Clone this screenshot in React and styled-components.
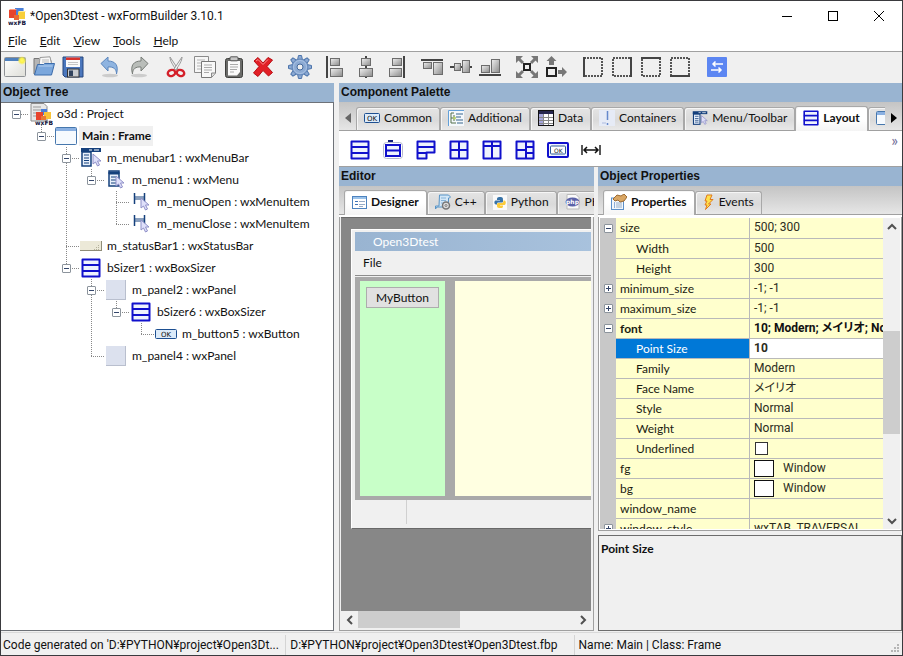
import React from "react";
import styled, { createGlobalStyle, css } from "styled-components";

const GlobalStyle = createGlobalStyle`
  * {
    box-sizing: border-box;
  }
  body {
    margin: 0;
    font-family: Lato, "Noto Sans CJK JP", sans-serif;
    font-size: 12px;
    line-height: 20px;
    color: #111;
    overflow: hidden;
  }
  button, input {
    font: inherit;
    color: inherit;
    border: 0;
    padding: 0;
    margin: 0;
    background: none;
  }
  svg {
    display: block;
    flex: none;
  }
`;

/* ---------- window ---------- */

const Window = styled.div`
  display: flex;
  flex-direction: column;
  height: 100vh;
  border: 1px solid #3a3a3e;
  background: #f0f0f0;
  white-space: nowrap;
`;

const TitleBar = styled.header`
  display: flex;
  align-items: center;
  height: 30px;
  padding-left: 7px;
  background: #fff;
`;

const Title = styled.h1`
  flex: 1;
  margin: 0;
  padding-left: 4px;
  font-family: Roboto, sans-serif;
  font-size: 12px;
  font-weight: 400;
`;

const WindowButton = styled.button`
  display: flex;
  align-items: center;
  justify-content: center;
  width: 46px;
  height: 30px;
`;

const MenuBar = styled.nav`
  display: flex;
  height: 20px;
  padding-left: 7px;
  gap: 13px;
  background: #fff;
`;

const MenuButton = styled.button`
  &::first-letter {
    text-decoration: underline;
  }
`;

const ToolBar = styled.div`
  display: flex;
  height: 32px;
  border-top: 1px solid #a0a0a0;
  overflow: hidden;
`;

const ToolGroup = styled.div`
  display: flex;
  margin-right: 8px;
`;

const ToolButton = styled.button`
  display: flex;
  align-items: center;
  justify-content: center;
  width: 29px;
  height: 30px;
  padding-right: 1px;
`;

const Main = styled.main`
  display: grid;
  grid-template-columns: minmax(0, 333fr) minmax(0, 563fr);
  gap: 5px;
  flex: 1;
  min-height: 0;
`;

const Pane = styled.section`
  display: flex;
  flex-direction: column;
  min-width: 0;
  min-height: 0;
`;

const Caption = styled.h2`
  flex: none;
  height: 19px;
  margin: 0;
  padding-left: 2px;
  background: #99b4d1;
  font-family: "Liberation Sans", sans-serif;
  font-size: 12px;
  line-height: 19px;
  font-weight: 700;
`;

const StatusBar = styled.footer`
  display: flex;
  height: 23px;
  padding-top: 2px;
  border-top: 1px solid #d9d9d9;
  font-family: Roboto, sans-serif;
`;

const StatusCell = styled.div`
  flex: ${(p) => p.$grow} 1 0;
  min-width: 0;
  padding: 0 4px 0 ${(p) => (p.$first ? "2px" : "4px")};
  border-right: ${(p) => (p.$last ? "0" : "1px solid #d4d4d4")};
  overflow: hidden;
  text-overflow: ellipsis;
`;

const Grip = styled.div`
  display: flex;
  align-items: flex-end;
  padding: 0 2px 2px 0;
`;

/* ---------- tree ---------- */

const Tree = styled.ul`
  flex: 1;
  margin: 0 0 1px;
  padding: 0 0 0 3px;
  border: 1px solid #6e7278;
  border-left: 0;
  background: #fff;
  list-style: none;
  overflow: hidden;
`;

const TreeRow = styled.li`
  display: flex;
  align-items: center;
  height: 22px;
`;

const dotsDown = "repeating-linear-gradient(180deg, #888 0 1px, transparent 1px 2px)";
const dotsAcross = "repeating-linear-gradient(90deg, #888 0 1px, transparent 1px 2px)";

const guides = {
  none: "none",
  start: `${dotsAcross} 13px 11px / 12px 1px no-repeat`,
  line: `${dotsDown} 12px 0 / 1px 22px no-repeat`,
  tee: `${dotsDown} 12px 0 / 1px 22px no-repeat, ${dotsAcross} 12px 11px / 13px 1px no-repeat`,
  end: `${dotsDown} 12px 0 / 1px 12px no-repeat, ${dotsAcross} 12px 11px / 13px 1px no-repeat`,
};

const Guide = styled.span`
  display: flex;
  align-items: center;
  justify-content: center;
  width: 25px;
  height: 22px;
  padding-top: 1px;
  background: ${(p) => guides[p.$kind]};
`;

const Expander = styled.button`
  display: flex;
  align-items: center;
  justify-content: center;
  width: 9px;
  height: 9px;
  border: 1px solid #8c949c;
  border-radius: 1px;
  background: #fff;
`;

const TreeIcon = styled.span`
  display: flex;
  align-items: center;
  justify-content: center;
  width: 25px;
  height: 22px;
  padding-right: 1px;
`;

const TreeLabel = styled.span`
  padding: 0 2px 0 3px;
  ${(p) =>
    p.$selected &&
    css`
      background: #f0f0f0;
      font-weight: 700;
    `}
`;

/* ---------- notebooks ---------- */

const TabStrip = styled.div`
  display: flex;
  align-items: flex-end;
  flex: none;
  height: 31px;
  padding: 0 0 2px ${(p) => p.$inset || "5px"};
  background: linear-gradient(#c4c4c4, #e6e6e6 28px, #a0a0a0 28px 29px, #fff 29px);
  overflow: hidden;
`;

const TabList = styled.div`
  display: flex;
  align-items: flex-end;
  flex: 1;
  min-width: 0;
  overflow: hidden;
`;

const Tab = styled.button`
  display: flex;
  align-items: center;
  flex: none;
  gap: 4px;
  height: ${(p) => (p.$active ? "25px" : "24px")};
  padding: 0 7px 2px;
  border: 1px solid #a8a8a8;
  border-bottom: ${(p) => (p.$active ? "0" : "1px solid #a0a0a0")};
  border-radius: 3px 3px 0 0;
  background: ${(p) =>
    p.$active ? "linear-gradient(#fff 50%, #f4f4f4)" : "linear-gradient(#e4e4e4, #dadada 55%, #e9e9e9)"};
  box-shadow: inset 1px 1px #f6f6f6;
  font-weight: ${(p) => (p.$active ? 700 : 400)};
`;

const StripArrow = styled.button`
  display: flex;
  align-items: center;
  justify-content: center;
  flex: none;
  width: 17px;
  height: 25px;
  padding-bottom: 2px;
`;

const Palette = styled.div`
  display: flex;
  justify-content: space-between;
  flex: none;
  height: 34px;
  padding: 0 4px;
  background: #fff;
  border-bottom: 1px solid #a0a0a0;
`;

const PaletteTools = styled.div`
  display: flex;
`;

const PaletteButton = styled.button`
  display: flex;
  align-items: center;
  justify-content: center;
  width: 33px;
  height: 33px;
`;

const MoreButton = styled.button`
  align-self: flex-start;
  height: 14px;
  font-size: 16px;
  line-height: 8px;
  color: #6f6a96;
`;

const Lower = styled.div`
  display: grid;
  grid-template-columns: minmax(0, 255fr) minmax(0, 304fr);
  gap: 4px;
  flex: 1;
  min-height: 0;
`;

/* ---------- designer ---------- */

const DesignerFrame = styled.div`
  display: flex;
  flex-direction: column;
  flex: 1;
  min-height: 0;
  margin-bottom: 1px;
  padding: 0 2px 2px 1px;
  border: 1px solid #a0a0a0;
  border-top: 0;
  background: #f0f0f0;
`;

const Canvas = styled.div`
  flex: 1;
  min-height: 0;
  padding: 11px 0 0 10px;
  border-top: 1px solid #696969;
  background: #878787;
  overflow: hidden;
`;

const Form = styled.div`
  display: flex;
  flex-direction: column;
  width: 500px;
  height: 300px;
  padding: 2px 2px 1px 3px;
  border: 1px solid #fff;
  border-bottom-color: #696969;
  background: #f0f0f0;
`;

const FormTitle = styled.div`
  height: 19px;
  padding-left: 18px;
  background: linear-gradient(90deg, #99b4d1, #b9d1ea);
  color: #fff;
  line-height: 20px;
`;

const FormMenu = styled.div`
  height: 25px;
  padding-left: 8px;
  border-bottom: 1px solid #8d8d8d;
  line-height: 24px;
`;

const FormBody = styled.div`
  display: flex;
  flex: 1;
  gap: 10px;
  margin-top: 1px;
  padding: 4px 4px 4px 5px;
  background: #a9a9a9;
`;

const GreenPanel = styled.div`
  width: 85px;
  padding: 6px;
  background: #c8ffc8;
`;

const YellowPanel = styled.div`
  flex: 1;
  background: #ffffe1;
`;

const FormButton = styled.button`
  width: 100%;
  height: 21px;
  border: 1px solid #adadad;
  background: #e1e1e1;
`;

const FormStatus = styled.div`
  display: grid;
  grid-template-columns: 52px 1fr;
  height: 27px;
  padding-bottom: 3px;
`;

const FormStatusCell = styled.div`
  border-right: 1px solid #d0d0d0;
`;

const HScroll = styled.div`
  display: flex;
  flex: none;
  height: 17px;
  background: #f0f0f0;
`;

const ScrollButton = styled.button`
  display: flex;
  align-items: center;
  justify-content: center;
  grid-row: ${(p) => p.$row || "auto"};
  width: 17px;
  height: 17px;
  flex: none;
`;

const HTrack = styled.div`
  flex: 1;
  display: grid;
  grid-template-columns: 47fr 53fr;
`;

const Thumb = styled.div`
  background: #cdcdcd;
`;

/* ---------- property grid ---------- */

const GridFrame = styled.div`
  display: flex;
  flex: 1;
  min-height: 0;
  margin-bottom: 4px;
  padding: 1px 1px 1px 1px;
  border: 1px solid #a0a0a0;
  border-top: 0;
  background: #fff;
`;

const GridView = styled.div`
  flex: 1;
  min-width: 0;
  overflow: hidden;
  background: #c8c8c8;
`;

const Grid = styled.table`
  width: 100%;
  table-layout: fixed;
  border-collapse: collapse;

  td, th {
    height: 20px;
    padding: 0 0 0 4px;
    text-align: left;
    line-height: 19px;
    overflow: hidden;
  }
`;

const GutterCol = styled.col`
  width: 16px;
`;

const GutterCell = styled.td`
  && {
    background: #c8c8c8;
  }
`;

const NameCell = styled.th`
  && {
    padding-left: ${(p) => (p.$child ? "20px" : "4px")};
    border-bottom: 1px solid #b9b9b9;
    background: ${(p) => (p.$selected ? "#0078d7" : "#ffffcd")};
    color: ${(p) => (p.$selected ? "#fff" : "#1b1b10")};
    font-weight: ${(p) => (p.$bold ? 700 : 400)};
  }
`;

const ValueCell = styled.td`
  && {
    border-bottom: 1px solid #b9b9b9;
    border-left: 1px solid #b9b9b9;
    background: ${(p) => (p.$selected ? "#fff" : "#ffffcd")};
    color: ${(p) => (p.$bold ? "#111" : "#2c2c20")};
    font-family: Roboto, "Noto Sans CJK JP", sans-serif;
    font-weight: ${(p) => (p.$bold ? 700 : 400)};
    font-feature-settings: "palt";
  }
`;

const ValueInput = styled.input`
  display: block;
  width: 100%;
  height: 19px;
  font-weight: 700;
`;

const Check = styled.input`
  display: block;
  appearance: none;
  width: 13px;
  height: 13px;
  margin-left: 1px;
  border: 1px solid #333;
  background: #fff;
`;

const ColourValue = styled.span`
  display: flex;
  align-items: center;
  gap: 9px;
`;

const Swatch = styled.span`
  width: 20px;
  height: 17px;
  border: 1px solid #111;
  background: #fff;
`;

const VScroll = styled.div`
  display: grid;
  grid-template-rows: 17px 96fr 104fr 78fr 17px;
  width: 17px;
  background: #f0f0f0;
`;

const VThumb = styled.div`
  grid-row: 3;
  background: #cdcdcd;
`;

const Description = styled.div`
  flex: none;
  height: 96px;
  margin-bottom: 1px;
  padding: 3px 2px;
  border: 1px solid #6d6d6d;
  font-weight: 700;
`;

/* ---------- icons ---------- */

function Icon({ w = 22, h = 22, size, children, crisp }) {
  return (
    <svg
      width={size || w}
      height={size ? Math.round((size * h) / w) : h}
      viewBox={`0 0 ${w} ${h}`}
      fill="none"
      shapeRendering={crisp ? "crispEdges" : "auto"}
      aria-hidden="true"
    >
      {children}
    </svg>
  );
}

const LogoIcon = () => (
  <Icon w={18} h={18}>
    <path d="M8 1h8v3h-8z" fill="#8fb6f0" />
    <rect x="7" y="1" width="8" height="7" fill="#4b7fd8" />
    <rect x="1" y="3" width="7" height="8" fill="#e8442c" />
    <path d="M1 3l1-1h7l-1 1z" fill="#ff9a80" />
    <rect x="10" y="5" width="7" height="7" fill="#f8cf3a" />
    <path d="M10 5l1-1h7l-1 1z" fill="#ffeb94" />
    <rect x="6" y="8" width="5" height="5" fill="#e86a35" />
    <text x="0" y="18" fontFamily="DejaVu Sans" fontWeight="700" fontSize="6" fill="#11113a">
      wxFB
    </text>
  </Icon>
);

const ProjectIcon = () => (
  <Icon w={24} h={22}>
    <path d="M2 .5h13l3 3V18H2z" fill="#e8e8e8" stroke="#8c8c8c" />
    <path d="M4 4h8M4 7h8M4 10h6M4 13h5" stroke="#999" />
    <rect x="12" y="6" width="6" height="6" fill="#4b7fd8" />
    <rect x="7" y="9" width="7" height="8" fill="#e8442c" />
    <rect x="15" y="9" width="7" height="7" fill="#f8c43a" />
    <rect x="12" y="13" width="5" height="4" fill="#e87a35" />
    <text x="6" y="22" fontFamily="DejaVu Sans" fontWeight="700" fontSize="6" fill="#11113a">
      wxFB
    </text>
  </Icon>
);

const NewIcon = () => (
  <Icon>
    <defs>
      <radialGradient id="newGlow">
        <stop offset="0" stopColor="#fffb60" />
        <stop offset=".5" stopColor="#fbf04a" />
        <stop offset="1" stopColor="#fbf04a" stopOpacity="0" />
      </radialGradient>
      <linearGradient id="newPage" x2="1" y2="1">
        <stop offset="0" stopColor="#fff" />
        <stop offset="1" stopColor="#deded8" />
      </linearGradient>
    </defs>
    <rect x=".5" y="1.500" width="21" height="19" rx="1" fill="url(#newPage)" stroke="#8f9296" />
    <path d="M1 2h20v3H1z" fill="#4e80bd" />
    <circle cx="18" cy="4.500" r="4.500" fill="url(#newGlow)" />
  </Icon>
);

const OpenIcon = () => (
  <Icon>
    <path d="M1 18V2.500h5l2 2h10V18z" fill="#b5b5b5" stroke="#777" />
    <path d="M6 10l1-8.500L17 .8l2 9z" fill="#f7f7f7" stroke="#999" />
    <path d="M9 4h7M9 6h7" stroke="#bbb" />
    <path d="M1.500 19L4.500 8.500h6l1-1h10L18.500 19z" fill="#7ba7dc" stroke="#3c6cab" />
    <path d="M5.500 10h14" stroke="#b5d0f0" />
  </Icon>
);

const SaveIcon = () => (
  <Icon>
    <path d="M1 1h20v20H3l-2-2z" fill="#4b77bd" stroke="#26467c" />
    <rect x="4" y="1.500" width="14" height="9.500" fill="#fafafa" />
    <rect x="4" y="1.500" width="14" height="2.500" fill="#d7322c" />
    <path d="M6 6.500h10M6 8.500h10" stroke="#c5c5c5" />
    <rect x="5.500" y="13" width="11.500" height="8" fill="#c9ccd0" stroke="#333" />
    <rect x="7" y="14.500" width="4" height="5.500" fill="#31435e" />
  </Icon>
);

const UndoIcon = () => (
  <Icon>
    <ellipse cx="11" cy="19.500" rx="8" ry="1.700" fill="#ccc" />
    <path d="M2 7.500L9 1v4c7 0 11 4 8.500 13 0-5-3-7.500-8.500-7v4z" fill="#8fb4e0" stroke="#5b86bd" />
  </Icon>
);

const RedoIcon = () => (
  <Icon>
    <ellipse cx="11" cy="19.500" rx="8" ry="1.700" fill="#ccc" />
    <path d="M20 7.500L13 1v4C6 5 2 9 4.500 18c0-5 3-7.500 8.500-7v4z" fill="#b9bdb9" stroke="#777c77" />
  </Icon>
);

const CutIcon = () => (
  <Icon>
    <path d="M5 1l8 12-2 1C8 9 5 5 5 1z" fill="#eee" stroke="#999" />
    <path d="M17 1L9 13l2 1c3-5 6-9 6-13z" fill="#f4f4f4" stroke="#999" />
    <ellipse cx="6.500" cy="17" rx="3.800" ry="3" stroke="#d4202a" strokeWidth="2.400" transform="rotate(-18 6.500 17)" />
    <ellipse cx="15.500" cy="17" rx="3.800" ry="3" stroke="#d4202a" strokeWidth="2.400" transform="rotate(18 15.500 17)" />
  </Icon>
);

const CopyIcon = () => (
  <Icon>
    <path d="M.5.5h14v16H.5z" fill="#f6f6f6" stroke="#8b8b8b" />
    <path d="M3 4h8M3 7h8M3 10h8M3 13h4" stroke="#b5b5b5" />
    <path d="M7.500 5.500h14V17l-4 4.500h-10z" fill="#f8f8f8" stroke="#777" />
    <path d="M17.500 21v-4h4" fill="#ddd" stroke="#888" />
    <path d="M10 9h8M10 11.500h8M10 14h8M10 16.500h5" stroke="#aaa" />
  </Icon>
);

const PasteIcon = () => (
  <Icon>
    <rect x="2.500" y="2.500" width="17" height="19" rx="2" fill="#6a6b69" stroke="#3d3e3c" />
    <path d="M5 5h12v11l-3 3.500H5z" fill="#fafafa" />
    <rect x="7" y=".8" width="8" height="4" rx="1" fill="#c5c5c5" stroke="#555" />
    <path d="M7 8.500h8M7 11h8M7 13.500h7M7 16h4" stroke="#aaa" />
  </Icon>
);

const DeleteIcon = () => (
  <Icon>
    <path
      d="M2 5l4-3.500 5 5.500 5-5.500L20.500 4 15 10.500l5.500 6-4 3.500-5.500-5.500L6 20.500 1.500 17 7 10.500z"
      fill="#e21f26"
      stroke="#b90d13"
      strokeLinejoin="round"
    />
    <path d="M4 5l2-1.500 5 5 5-5" stroke="#f98d8d" />
  </Icon>
);

const GearIcon = () => (
  <Icon w={24} h={24}>
    {[0, 45, 90, 135, 180, 225, 270, 315].map((a) => (
      <path key={a} d="M9.500 5l1-4.500h3l1 4.500z" fill="#8caad3" stroke="#4c74ab" transform={`rotate(${a} 12 12)`} />
    ))}
    <circle cx="12" cy="12" r="8" fill="#8caad3" stroke="#6386b8" />
    <circle cx="12" cy="12" r="6.500" stroke="#a9c2e4" />
    <circle cx="12" cy="12" r="3" fill="#f0f0f0" stroke="#44699c" />
  </Icon>
);

function AlignIcon({ rects, line }) {
  return (
    <Icon>
      <defs>
        <linearGradient id="alignFill" x2="1" y2="1">
          <stop offset="0" stopColor="#f0f0f0" />
          <stop offset="1" stopColor="#8b8b8b" />
        </linearGradient>
      </defs>
      <path d={line} stroke="#444" strokeWidth="2" shapeRendering="crispEdges" />
      {rects.map(([x, y, w, h]) => (
        <rect
          key={`${x}-${y}`}
          x={x + 0.5}
          y={y + 0.5}
          width={w}
          height={h}
          fill="url(#alignFill)"
          stroke="#6c6c6c"
        />
      ))}
    </Icon>
  );
}

const AlignLeftIcon = () => <AlignIcon line="M1 0v22" rects={[[4, 2, 9, 7], [4, 12, 12, 8]]} />;
const AlignCenterIcon = () => <AlignIcon line="M11 0v22" rects={[[6, 2, 9, 7], [4, 12, 13, 8]]} />;
const AlignRightIcon = () => <AlignIcon line="M20 0v22" rects={[[8, 2, 9, 7], [5, 12, 12, 8]]} />;
const AlignTopIcon = () => <AlignIcon line="M0 4h22" rects={[[2, 6, 8, 6], [12, 6, 9, 12]]} />;
const AlignMiddleIcon = () => <AlignIcon line="M0 11h22" rects={[[4, 7, 6, 7], [12, 4, 7, 12]]} />;
const AlignBottomIcon = () => <AlignIcon line="M0 19h22" rects={[[2, 9, 8, 7], [12, 3, 8, 13]]} />;

const ExpandIcon = () => (
  <Icon>
    <path d="M3 3l4 4M19 3l-4 4M3 19l4-4M19 19l-4-4" stroke="#777" strokeWidth="3" />
    <path d="M0 0h7L0 7zM22 0v7l-7-7zM0 22v-7l7 7zM22 22h-7l7-7z" fill="#777" />
    <rect x="8" y="8" width="6" height="6" fill="#eee" stroke="#222" strokeWidth="2" />
  </Icon>
);

const StretchIcon = () => (
  <Icon>
    <path d="M6.500 0l5 5H9v4H4V5H1.500zM22 16l-5-5v3h-4v4h4v3z" fill="#777" />
    <rect x="2" y="12" width="9" height="8" fill="#eee" stroke="#222" strokeWidth="2" />
  </Icon>
);

function BorderIcon({ side }) {
  return (
    <Icon crisp>
      <rect x="2" y="2" width="18" height="18" stroke="#555" strokeWidth="2" strokeDasharray="2 1" />
      <path d={side} stroke="#444" strokeWidth="2" />
    </Icon>
  );
}

const SwapIcon = () => (
  <Icon w={20} h={20}>
    <rect width="20" height="20" rx="1" fill="#5c86f2" />
    <path d="M16 7H6M8.500 4.500L6 7l2.500 2.500M4 13h10M11.500 10.500L14 13l-2.500 2.500" stroke="#fff" strokeWidth="1.500" />
  </Icon>
);

/* sizer icons share an outlined blue box */
function SizerIcon({ lines, size, outline = "M1.500 1.500h17v17h-17z" }) {
  return (
    <Icon w={20} h={20} size={size}>
      <path d={outline} fill="#eef2fd" stroke="#1010cc" strokeWidth="2" strokeLinejoin="round" />
      <path d={lines} stroke="#1010cc" strokeWidth="2" />
    </Icon>
  );
}

const BoxSizer = ({ size }) => <SizerIcon size={size} lines="M1 7h18M1 13h18" />;
const WrapSizer = () => <SizerIcon outline="M1.500 1.500h17v11h-8v6h-9z" lines="M1 7h18M1 13h10" />;
const GridSizer = () => <SizerIcon lines="M1 10h18M10 1v18" />;
const FlexSizer = () => <SizerIcon lines="M1 6h18M10 1v18" />;
const BagSizer = () => <SizerIcon lines="M1 10h10M11 1v18M11 7h8M11 13h8" />;

const StaticSizer = () => (
  <Icon w={20} h={20}>
    <rect x=".5" y="2.500" width="19" height="16" rx="3" stroke="#b5b9cc" />
    <path d="M5 1h5" stroke="#111e78" strokeWidth="2" />
    <rect x="3" y="5" width="14" height="11" fill="#eef2fd" stroke="#1010cc" strokeWidth="2" />
    <path d="M3 10.500h14" stroke="#1010cc" strokeWidth="2" />
  </Icon>
);

const DialogSizer = () => (
  <Icon w={22} h={18}>
    <rect x="1" y="2" width="20" height="14" rx="1" fill="#eef2fd" stroke="#1010cc" strokeWidth="2" />
    <rect x="3.500" y="5" width="15" height="8" rx="1" fill="#fff" stroke="#2e5b97" />
    <text x="7" y="11.500" fontFamily="DejaVu Sans" fontSize="6" fill="#222">
      OK
    </text>
  </Icon>
);

const SpacerIcon = () => (
  <Icon w={20} h={12}>
    <path d="M1 1v10M19 1v10" stroke="#222" strokeWidth="1.500" />
    <path d="M3 6h14M6 3L3 6l3 3M14 3l3 3-3 3" stroke="#111" strokeWidth="1.500" />
  </Icon>
);

const OkIcon = ({ w = 16 }) => (
  <Icon w={w} h={10}>
    <rect x=".5" y=".5" width={w - 1} height="9" rx="1" fill="#dcebfa" stroke="#1d4f91" />
    <text x={w / 2} y="7.500" textAnchor="middle" fontFamily="DejaVu Sans" fontSize="7" fill="#111">
      OK
    </text>
  </Icon>
);

const FrameIcon = ({ w = 22, h = 18 }) => (
  <Icon w={w} h={h}>
    <rect x=".5" y=".5" width={w - 1} height={h - 1} rx="1" fill="#f6fafe" stroke="#4677ad" />
    <path d={`M1 1h${w - 2}v3H1z`} fill="#8bb1e2" />
  </Icon>
);

const Cursor = ({ x, y }) => (
  <path
    transform={`translate(${x} ${y})`}
    d="M0 0v10l2.500-2 2 4 2-1-2-4H8z"
    fill="#dfe0fa"
    stroke="#8f90c8"
  />
);

const MenuBarIcon = ({ size }) => (
  <Icon w={22} h={20} size={size}>
    <path d="M1 0h20v4H1z" fill="#15407c" />
    <path d="M9 2h3M14 2h5" stroke="#fff" />
    <rect x="2" y="4" width="9" height="14" fill="#e8f0fb" stroke="#15407c" strokeWidth="1.500" />
    <path d="M4 7h5M4 10h5M4 12.500h5M4 15h5" stroke="#15407c" />
    <Cursor x={13} y={6} />
  </Icon>
);

const MenuIcon = () => (
  <Icon w={20} h={20}>
    <rect x="3" y="1" width="10" height="15" fill="#e8f0fb" stroke="#15407c" strokeWidth="1.500" />
    <path d="M3 2h10v2H3zM5 7h6M5 10h6M5 13h6" stroke="#15407c" fill="#15407c" />
    <Cursor x={10} y={6} />
  </Icon>
);

const MenuItemIcon = () => (
  <Icon w={18} h={20}>
    <path d="M2.500 1v11M12.500 1v11" stroke="#15407c" strokeWidth="1.500" />
    <path d="M3 5h9M3 7h9" stroke="#15407c" />
    <Cursor x={9} y={6} />
  </Icon>
);

const StatusIcon = () => (
  <Icon w={22} h={10} crisp>
    <rect width="22" height="10" fill="#ece9d8" />
    <path d="M0 9.500h22M21.500 0v10" stroke="#8f8c78" />
    <path d="M18 4h2M16 6h4M14 8h6" stroke="#b5b29c" strokeDasharray="1 1" />
  </Icon>
);

const PanelIcon = () => (
  <Icon w={20} h={20} crisp>
    <rect width="20" height="20" fill="#dce1ee" />
    <path d="M0 19.500h20M19.500 0v20" stroke="#b9bfce" />
  </Icon>
);

const AdditionalIcon = () => (
  <Icon w={16} h={16}>
    <path d="M0 0h16v16H0z" fill="#f4f8fc" />
    <path d="M.5 16V.5H16" stroke="#63a0d8" />
    <path d="M3 3h3M3 3v10M3 8h3M3 13h5M6 5v6" stroke="#55704c" />
    <path d="M8 4h7M8 7h5M8 10h7M9 13h6" stroke="#36648b" />
    <circle cx="6.500" cy="8" r="1.500" fill="#b6cf6a" />
  </Icon>
);

const DataIcon = () => (
  <Icon w={16} h={16} crisp>
    <rect x=".5" y=".5" width="15" height="15" fill="#fff" stroke="#111" />
    <path d="M1 1h14v3H1z" fill="#26264e" />
    <path d="M1 4h4v11H1z" fill="#a6a6dc" />
    <path d="M5.500 4v11M10.500 4v11M1 7.500h14M1 10.500h14M1 13.500h14" stroke="#888" />
  </Icon>
);

const ContainersIcon = () => (
  <Icon w={16} h={16}>
    <rect width="16" height="16" fill="#e6ebf6" />
    <path d="M8.500 1v9M8.500 13v2" stroke="#6689cc" strokeWidth="1.500" />
    <path d="M3 13h4" stroke="#aebce0" />
  </Icon>
);

const DesignerIcon = () => (
  <Icon w={15} h={13}>
    <rect x=".5" y=".5" width="14" height="12" fill="#fff" stroke="#4d83bf" />
    <path d="M1 1h13v2H1z" fill="#9cc3ea" />
    <path d="M3 5.500h3M3 8.500h3" stroke="#3f74b8" />
    <path d="M7 5.500h6M7 8.500h6M7 10.500h4" stroke="#97acc7" />
  </Icon>
);

const CppIcon = () => (
  <Icon w={16} h={16}>
    <path d="M4.500 1h9l2 2-1 1h-1v9H2l-1.500 2V12H4z" fill="#d3e7f7" stroke="#5693c6" />
    <path d="M6 4h5M6 6.500h5M6 9h3" stroke="#86b3d8" />
    <circle cx="11" cy="11.500" r="3.500" fill="#ddd" stroke="#777" strokeWidth="1.500" />
    <circle cx="11" cy="11.500" r="1" fill="#fff" stroke="#777" />
  </Icon>
);

const PythonIcon = () => (
  <Icon w={14} h={15}>
    <rect width="14" height="15" fill="#fafafa" />
    <path d="M7 2c3 0 3 1 3 3v1.500c0 1-1 1-2 1H5c-1 0-1 1-1 2H3C1 9.500 1 6 2.500 5.500H7V5H4c0-2 0-3 3-3z" fill="#3873a8" />
    <path d="M7 13c-3 0-3-1-3-3V9c0-1 1-1 2-1h3c1 0 1.500-1 1.500-2.500h.8c2 0 2 4 .2 4.500H7v.5h3c0 2 0 2.500-3 2.500z" fill="#fbcb3b" />
  </Icon>
);

const PhpIcon = () => (
  <Icon w={16} h={16}>
    <path d="M2 .5h9l3 3V15H2z" fill="#fafafa" stroke="#bbb" />
    <ellipse cx="7.500" cy="8" rx="7" ry="4.500" fill="#5b62a8" />
    <text x="7.500" y="10" textAnchor="middle" fontFamily="DejaVu Sans" fontSize="6" fontWeight="700" fill="#fff">
      php
    </text>
  </Icon>
);

const PropertiesIcon = () => (
  <Icon w={16} h={16}>
    <rect x=".5" y="4" width="12" height="11.500" fill="#f2f7fc" stroke="#5b8fc9" />
    <path d="M3 9h1M3 11h1M3 13h1" stroke="#2864b5" />
    <path d="M5 9h6M5 11h6M5 13h6" stroke="#98aec8" />
    <path d="M2 5l4-4 4 1 3-2 3 3-3 4-4 1-2-2-3 1z" fill="#d9a663" stroke="#9b6a33" />
  </Icon>
);

const EventsIcon = () => (
  <Icon w={12} h={16}>
    <path d="M4 1h5L7 5.500h3L5.500 10H8l-5.500 5.500L4 11H2l2-4H2z" fill="#ffe14c" stroke="#e07a1c" />
  </Icon>
);

const Chevron = ({ d }) => (
  <Icon w={10} h={10}>
    <path d={d} stroke="#505050" strokeWidth="2" />
  </Icon>
);

/* ---------- data ---------- */

const menus = ["File", "Edit", "View", "Tools", "Help"];

const toolGroups = [
  [["New", NewIcon], ["Open", OpenIcon], ["Save", SaveIcon]],
  [["Undo", UndoIcon], ["Redo", RedoIcon]],
  [["Cut", CutIcon], ["Copy", CopyIcon], ["Paste", PasteIcon], ["Delete", DeleteIcon]],
  [["Generate code", GearIcon]],
  [["Align left", AlignLeftIcon], ["Align center", AlignCenterIcon], ["Align right", AlignRightIcon]],
  [["Align top", AlignTopIcon], ["Align middle", AlignMiddleIcon], ["Align bottom", AlignBottomIcon]],
  [["Expand", ExpandIcon], ["Stretch", StretchIcon]],
  [
    ["Left border", () => <BorderIcon side="M2 1v20" />],
    ["Right border", () => <BorderIcon side="M20 1v20" />],
    ["Top border", () => <BorderIcon side="M1 2h20" />],
    ["Bottom border", () => <BorderIcon side="M1 20h20" />],
  ],
  [["Swap", SwapIcon]],
];

const tree = [
  { g: ["start"], open: true, icon: <ProjectIcon />, label: "o3d : Project" },
  { g: ["none", "end"], open: true, icon: <FrameIcon />, label: "Main : Frame", selected: true },
  { g: ["none", "none", "tee"], open: true, icon: <MenuBarIcon />, label: "m_menubar1 : wxMenuBar" },
  { g: ["none", "none", "line", "end"], open: true, icon: <MenuIcon />, label: "m_menu1 : wxMenu" },
  { g: ["none", "none", "line", "none", "tee"], icon: <MenuItemIcon />, label: "m_menuOpen : wxMenuItem" },
  { g: ["none", "none", "line", "none", "end"], icon: <MenuItemIcon />, label: "m_menuClose : wxMenuItem" },
  { g: ["none", "none", "tee"], icon: <StatusIcon />, label: "m_statusBar1 : wxStatusBar" },
  { g: ["none", "none", "end"], open: true, icon: <BoxSizer />, label: "bSizer1 : wxBoxSizer" },
  { g: ["none", "none", "none", "tee"], open: true, icon: <PanelIcon />, label: "m_panel2 : wxPanel" },
  { g: ["none", "none", "none", "line", "end"], open: true, icon: <BoxSizer />, label: "bSizer6 : wxBoxSizer" },
  { g: ["none", "none", "none", "line", "none", "end"], icon: <OkIcon w={22} />, label: "m_button5 : wxButton" },
  { g: ["none", "none", "none", "end"], icon: <PanelIcon />, label: "m_panel4 : wxPanel" },
];

const paletteTools = [
  ["wxBoxSizer", BoxSizer],
  ["wxStaticBoxSizer", StaticSizer],
  ["wxWrapSizer", WrapSizer],
  ["wxGridSizer", GridSizer],
  ["wxFlexGridSizer", FlexSizer],
  ["wxGridBagSizer", BagSizer],
  ["wxStdDialogButtonSizer", DialogSizer],
  ["spacer", SpacerIcon],
];

const properties = [
  { name: "size", value: "500; 300", box: "-" },
  { name: "Width", value: "500", child: true },
  { name: "Height", value: "300", child: true },
  { name: "minimum_size", value: "-1; -1", box: "+" },
  { name: "maximum_size", value: "-1; -1", box: "+" },
  { name: "font", value: "10; Modern; メイリオ; Normal", box: "-", bold: true },
  { name: "Point Size", value: "10", child: true, selected: true },
  { name: "Family", value: "Modern", child: true },
  { name: "Face Name", value: "メイリオ", child: true },
  { name: "Style", value: "Normal", child: true },
  { name: "Weight", value: "Normal", child: true },
  { name: "Underlined", check: true, child: true },
  { name: "fg", value: "Window", colour: true },
  { name: "bg", value: "Window", colour: true },
  { name: "window_name", value: "" },
  { name: "window_style", value: "wxTAB_TRAVERSAL", box: "+" },
];

function BoxToggle({ sign = "-", label }) {
  return (
    <Expander aria-label={label}>
      <Icon w={5} h={5} crisp>
        <path d={sign === "+" ? "M0 2.500h5M2.500 0v5" : "M0 2.500h5"} stroke="#34466b" />
      </Icon>
    </Expander>
  );
}

function PropertyValue({ row }) {
  if (row.selected) return <ValueInput aria-label={row.name} defaultValue={row.value} />;
  if (row.check) return <Check type="checkbox" aria-label={row.name} />;
  if (row.colour)
    return (
      <ColourValue>
        <Swatch />
        {row.value}
      </ColourValue>
    );
  return row.value;
}

function ObjectTree() {
  return (
    <Pane>
      <Caption>Object Tree</Caption>
      <Tree>
        {tree.map((row) => (
          <TreeRow key={row.label}>
            {row.g.map((kind, i) => (
              <Guide key={i} $kind={kind}>
                {row.open && i === row.g.length - 1 && <BoxToggle label={`Collapse ${row.label}`} />}
              </Guide>
            ))}
            <TreeIcon>{row.icon}</TreeIcon>
            <TreeLabel $selected={row.selected}>{row.label}</TreeLabel>
          </TreeRow>
        ))}
      </Tree>
    </Pane>
  );
}

function Editor() {
  return (
    <Pane>
      <Caption>Editor</Caption>
      <TabStrip>
        <TabList role="tablist">
          <Tab role="tab" $active aria-selected="true"><DesignerIcon />Designer</Tab>
          <Tab role="tab"><CppIcon />C++</Tab>
          <Tab role="tab"><PythonIcon />Python</Tab>
          <Tab role="tab"><PhpIcon />PHP</Tab>
        </TabList>
      </TabStrip>
      <DesignerFrame>
        <Canvas>
          <Form>
            <FormTitle>Open3Dtest</FormTitle>
            <FormMenu>File</FormMenu>
            <FormBody>
              <GreenPanel>
                <FormButton>MyButton</FormButton>
              </GreenPanel>
              <YellowPanel />
            </FormBody>
            <FormStatus>
              <FormStatusCell />
            </FormStatus>
          </Form>
        </Canvas>
        <HScroll>
          <ScrollButton aria-label="Scroll left"><Chevron d="M7 1L3 5l4 4" /></ScrollButton>
          <HTrack><Thumb /></HTrack>
          <ScrollButton aria-label="Scroll right"><Chevron d="M3 1l4 4-4 4" /></ScrollButton>
        </HScroll>
      </DesignerFrame>
    </Pane>
  );
}

function ObjectProperties() {
  return (
    <Pane>
      <Caption>Object Properties</Caption>
      <TabStrip>
        <TabList role="tablist">
          <Tab role="tab" $active aria-selected="true"><PropertiesIcon />Properties</Tab>
          <Tab role="tab"><EventsIcon />Events</Tab>
        </TabList>
      </TabStrip>
      <GridFrame>
        <GridView>
          <Grid>
            <colgroup>
              <GutterCol />
              <col />
              <col />
            </colgroup>
            <tbody>
              {properties.map((row) => (
                <tr key={row.name}>
                  <GutterCell>
                    {row.box && <BoxToggle sign={row.box} label={`Toggle ${row.name}`} />}
                  </GutterCell>
                  <NameCell scope="row" $child={row.child} $selected={row.selected} $bold={row.bold}>
                    {row.name}
                  </NameCell>
                  <ValueCell $selected={row.selected} $bold={row.bold}>
                    <PropertyValue row={row} />
                  </ValueCell>
                </tr>
              ))}
            </tbody>
          </Grid>
        </GridView>
        <VScroll>
          <ScrollButton aria-label="Scroll up"><Chevron d="M1 7l4-4 4 4" /></ScrollButton>
          <VThumb />
          <ScrollButton $row={5} aria-label="Scroll down"><Chevron d="M1 3l4 4 4-4" /></ScrollButton>
        </VScroll>
      </GridFrame>
      <Description>Point Size</Description>
    </Pane>
  );
}

function ComponentPalette() {
  return (
    <>
      <Caption>Component Palette</Caption>
      <TabStrip $inset="0px">
        <StripArrow aria-label="Previous tabs">
          <Icon w={6} h={10}><path d="M6 0v10L0 5z" fill="#666" /></Icon>
        </StripArrow>
        <TabList role="tablist">
          <Tab role="tab"><OkIcon />Common</Tab>
          <Tab role="tab"><AdditionalIcon />Additional</Tab>
          <Tab role="tab"><DataIcon />Data</Tab>
          <Tab role="tab"><ContainersIcon />Containers</Tab>
          <Tab role="tab"><MenuBarIcon size={16} />Menu/Toolbar</Tab>
          <Tab role="tab" $active aria-selected="true"><BoxSizer size={16} />Layout</Tab>
          <Tab role="tab" aria-label="Forms"><FrameIcon w={16} h={14} /></Tab>
        </TabList>
        <StripArrow aria-label="Next tabs">
          <Icon w={6} h={10}><path d="M0 0v10l6-5z" fill="#000" /></Icon>
        </StripArrow>
      </TabStrip>
      <Palette>
        <PaletteTools>
          {paletteTools.map(([name, Glyph]) => (
            <PaletteButton key={name} aria-label={name}><Glyph /></PaletteButton>
          ))}
        </PaletteTools>
        <MoreButton>»</MoreButton>
      </Palette>
    </>
  );
}

export default function App() {
  return (
    <Window>
      <GlobalStyle />
      <TitleBar>
        <LogoIcon />
        <Title>*Open3Dtest - wxFormBuilder 3.10.1</Title>
        <WindowButton aria-label="Minimize">
          <Icon w={10} h={10} crisp><path d="M0 5.500h10" stroke="#000" /></Icon>
        </WindowButton>
        <WindowButton aria-label="Maximize">
          <Icon w={10} h={10} crisp><path d="M.5.5h9v9h-9z" stroke="#000" /></Icon>
        </WindowButton>
        <WindowButton aria-label="Close">
          <Icon w={10} h={10}><path d="M0 0l10 10M10 0L0 10" stroke="#000" /></Icon>
        </WindowButton>
      </TitleBar>
      <MenuBar>
        {menus.map((name) => (
          <MenuButton key={name}>{name}</MenuButton>
        ))}
      </MenuBar>
      <ToolBar>
        {toolGroups.map((group) => (
          <ToolGroup key={group[0][0]}>
            {group.map(([name, Glyph]) => (
              <ToolButton key={name} aria-label={name}><Glyph /></ToolButton>
            ))}
          </ToolGroup>
        ))}
      </ToolBar>
      <Main>
        <ObjectTree />
        <Pane>
          <ComponentPalette />
          <Lower>
            <Editor />
            <ObjectProperties />
          </Lower>
        </Pane>
      </Main>
      <StatusBar>
        <StatusCell $first $grow={286}>Code generated on 'D:¥PYTHON¥project¥Open3Dt...</StatusCell>
        <StatusCell $grow={287}>D:¥PYTHON¥project¥Open3Dtest¥Open3Dtest.fbp</StatusCell>
        <StatusCell $last $grow={317}>Name: Main | Class: Frame</StatusCell>
        <Grip>
          <Icon w={9} h={9} crisp>
            <path d="M6 1h2M3 4h2M6 4h2M0 7h2M3 7h2M6 7h2" stroke="#b5b5b5" strokeWidth="2" />
          </Icon>
        </Grip>
      </StatusBar>
    </Window>
  );
}
